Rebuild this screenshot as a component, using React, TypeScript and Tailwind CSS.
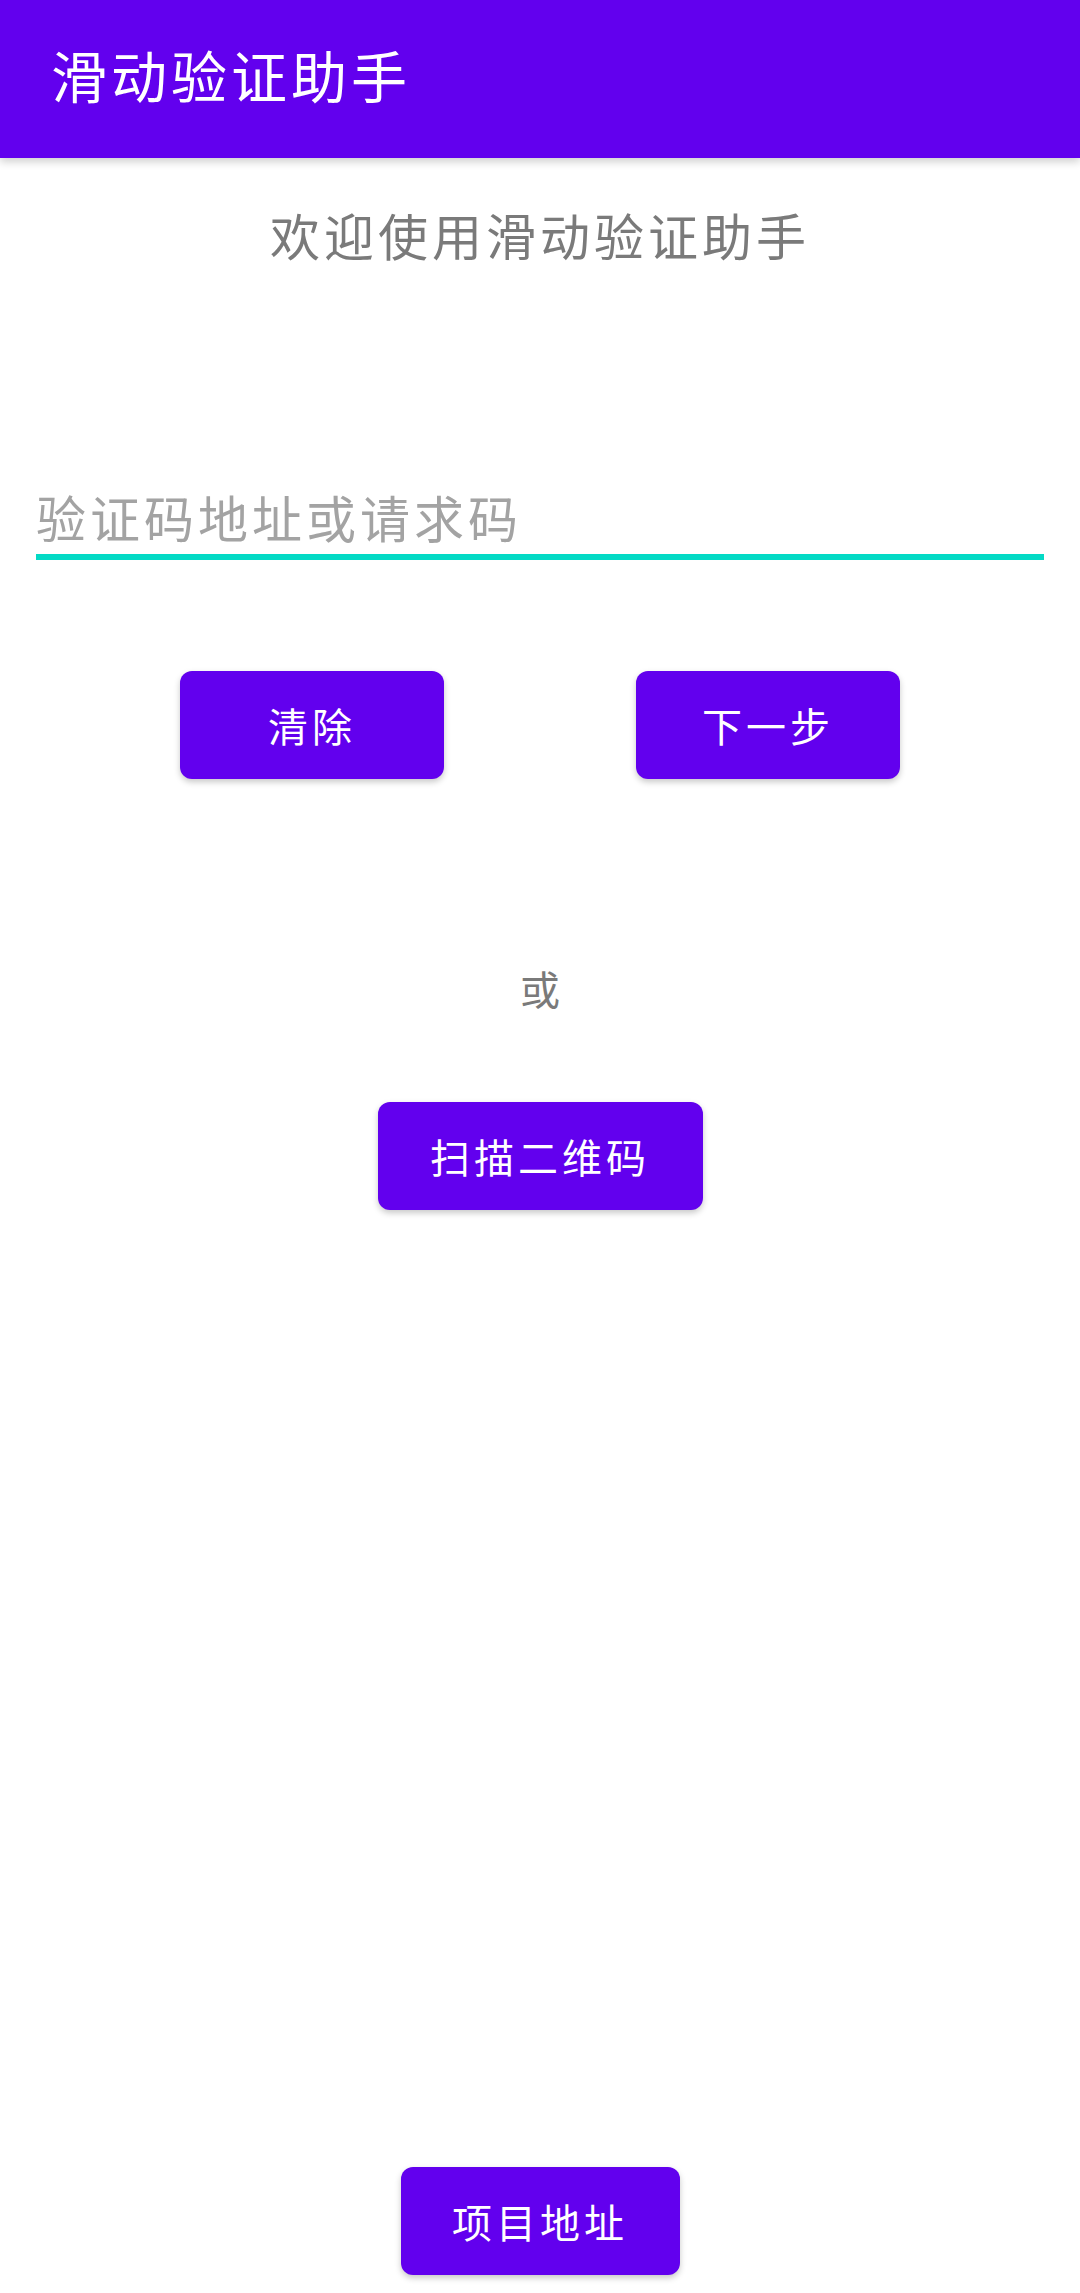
import { useState } from 'react';

const PurpleButton = ({ label, className = '' }: { label: string; className?: string }) => (
  <button
    className={`h-[108px] rounded-[12px] bg-[#6200ee] text-white text-[40px] leading-none tracking-[4px] shadow-[0_3px_6px_rgba(0,0,0,0.22)] ${className}`}
  >
    {label}
  </button>
);

const App = () => {
  const [code, setCode] = useState('');

  return (
    <div className="min-h-screen w-full flex flex-col bg-white font-['Noto_Sans_CJK_SC','Noto_Sans',sans-serif]">
      <header className="h-[158px] flex items-center pl-[51px] pb-[10px] bg-[#6200ee] text-white shadow-[0_4px_8px_rgba(0,0,0,0.18)] relative z-10">
        <h1 className="text-[56px] leading-none tracking-[4px] font-normal">滑动验证助手</h1>
      </header>

      <p className="mt-[46px] text-center text-[50px] leading-[60px] tracking-[4px] text-[#7a7a7a]">
        欢迎使用滑动验证助手
      </p>

      <div className="mt-[222px] ml-[36px] w-[1008px] pb-[8px] border-b-[6px] border-[#03dac5]">
        <input
          value={code}
          onChange={(e) => setCode(e.target.value)}
          placeholder="验证码地址或请求码"
          className="w-full h-[60px] text-[50px] leading-[60px] tracking-[4px] text-[#333] placeholder:text-[#a3a3a3] outline-none bg-transparent"
        />
      </div>

      <div className="mt-[111px] flex pl-[180px] gap-[192px]">
        <PurpleButton label="清除" className="w-[264px]" />
        <PurpleButton label="下一步" className="w-[264px]" />
      </div>

      <p className="mt-[185px] text-center text-[40px] leading-[48px] text-[#7a7a7a]">或</p>

      <div className="mt-[90px] flex justify-center">
        <PurpleButton label="扫描二维码" className="w-[325px]" />
      </div>

      <div className="mt-auto mb-[18px] flex justify-center">
        <PurpleButton label="项目地址" className="w-[279px]" />
      </div>
    </div>
  );
};

export default App;
